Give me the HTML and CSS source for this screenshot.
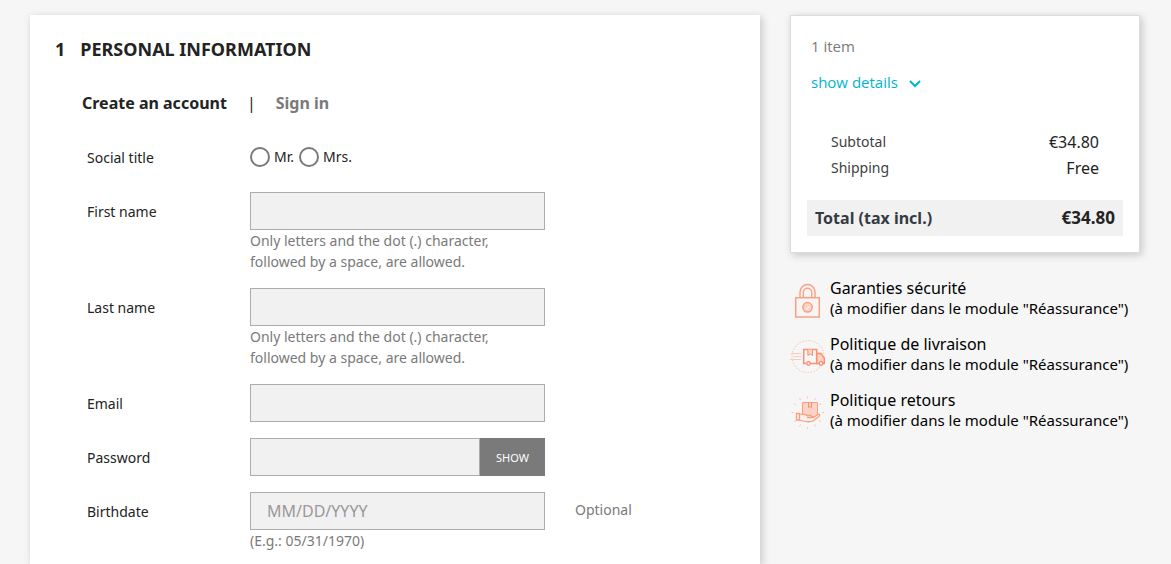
FILE: index.html
```html
<!DOCTYPE html>
<html lang="en">
<head>
<meta charset="utf-8">
<title>Checkout</title>
<link rel="stylesheet" href="styles.css">
</head>
<body>
<div class="checkout">
  <main class="card step">
    <h1 class="step-title"><span>1</span><span>Personal Information</span></h1>
    <nav class="tabs">
      <a class="tab tab-active" href="#create">Create an account</a>
      <span class="tab-divider">|</span>
      <a class="tab" href="#signin">Sign in</a>
    </nav>
    <form class="form">
      <div class="row" role="radiogroup" aria-labelledby="social">
        <span class="row-label" id="social">Social title</span>
        <div class="radios">
          <label class="radio"><input type="radio" name="title">Mr.</label>
          <label class="radio"><input type="radio" name="title">Mrs.</label>
        </div>
      </div>
      <div class="row">
        <label class="row-label" for="first">First name</label>
        <div class="field">
          <input class="control" id="first" type="text">
          <p class="hint">Only letters and the dot (.) character, followed by a space, are allowed.</p>
        </div>
      </div>
      <div class="row">
        <label class="row-label" for="last">Last name</label>
        <div class="field">
          <input class="control" id="last" type="text">
          <p class="hint">Only letters and the dot (.) character, followed by a space, are allowed.</p>
        </div>
      </div>
      <div class="row">
        <label class="row-label" for="email">Email</label>
        <div class="field"><input class="control" id="email" type="email"></div>
      </div>
      <div class="row">
        <label class="row-label" for="password">Password</label>
        <div class="field password">
          <input class="control" id="password" type="password">
          <button class="show" type="button">Show</button>
        </div>
      </div>
      <div class="row">
        <label class="row-label" for="birth">Birthdate</label>
        <div class="field">
          <input class="control" id="birth" type="text" placeholder="MM/DD/YYYY">
          <p class="hint">(E.g.: 05/31/1970)</p>
        </div>
        <span class="optional">Optional</span>
      </div>
    </form>
  </main>
  <aside class="side">
    <section class="card summary">
      <p class="count">1 item</p>
      <a class="details" href="#details">show details
        <svg class="chevron" width="14" height="9" viewBox="0 0 14 9"><path d="M2 2l5 5 5-5" fill="none" stroke="currentColor" stroke-width="2"/></svg>
      </a>
      <dl class="lines">
        <div class="line"><dt>Subtotal</dt><dd>€34.80</dd></div>
        <div class="line"><dt>Shipping</dt><dd>Free</dd></div>
      </dl>
      <div class="total"><span>Total (tax incl.)</span><span class="total-value">€34.80</span></div>
    </section>
    <ul class="reassurance">
      <li class="promise">
        <svg class="promise-icon" viewBox="0 0 35 35" fill="none" stroke="#fca082">
          <rect x="5.700" y="14.700" width="23.600" height="19.300" stroke-width="1.500"/>
          <path d="M10 14.500V9a7.500 7.500 0 0 1 15 0v5.500M13.300 14.500V9.500a4.200 4.200 0 0 1 8.400 0v5" stroke-width="1.400"/>
          <circle cx="17.500" cy="24.300" r="4.700" fill="#fcd3c6" stroke-width="1.500"/>
          <path d="M15.500 24.500l1.500 1.500 3-3" stroke="#fff" stroke-width=".8"/>
        </svg>
        <p class="promise-text">Garanties sécurité<br><span class="promise-note">(à modifier dans le module "Réassurance")</span></p>
      </li>
      <li class="promise">
        <svg class="promise-icon" viewBox="0 0 35 35" fill="none" stroke="#f98f6c">
          <circle cx="18" cy="17.500" r="16" stroke="#f9cfc2" stroke-width="1.200" stroke-dasharray="1.500 1.500"/>
          <path d="M1 14.500h10M3 17.500h8M0 20.500h11" stroke="#fbcbbb"/>
          <path d="M13.700 10.500h13v14h-13z" fill="#f6f6f6" stroke-width="1.500"/>
          <path d="M17.900 10.500v6l2.300-1.500 2.300 1.500v-6" fill="#fcd3c6"/>
          <path d="M26.700 14.500h4.300l3.500 5v5h-7.800z" fill="#fcd3c6" stroke-width="1.500"/>
          <circle cx="18.500" cy="24.500" r="1.800" fill="#f6f6f6" stroke-width="1.300"/>
          <circle cx="31" cy="24.500" r="1.800" fill="#f6f6f6" stroke-width="1.300"/>
        </svg>
        <p class="promise-text">Politique de livraison<br><span class="promise-note">(à modifier dans le module "Réassurance")</span></p>
      </li>
      <li class="promise">
        <svg class="promise-icon" viewBox="0 0 35 35" fill="none" stroke="#fb9f82">
          <path d="M17.500 1.500v2M9.500 3l1 2M25.500 3l-1 2M4 8.500l2 1.500M31 8.500l-2 1.500M1.500 17.500h2M32 17.500h2M4 26.500l2-1M31 26.500l-2-1M9.500 31.500l1-2M25.500 31.500l-1-2M17.500 32v2" stroke="#fbc4b2"/>
          <path d="M12.500 7.500h15v14h-15z" fill="#fcd3c6"/>
          <path d="M18.500 7.500v5l1.500-1 1.500 1v-5" stroke="#f98f6c"/>
          <path d="M6.500 18.500h3v6.500h-3z" fill="#f6f6f6" stroke-width="1.300"/>
          <path d="M9.500 19.500c4-1.500 6 .5 8 1h3.500c1.500.5 1 2-.5 2H17h6l5-3c2-.5 2 1 1 2l-6 4.500c-4 1.500-9 .5-13.500-1z" fill="#f9f1ee" stroke-width="1.300"/>
        </svg>
        <p class="promise-text">Politique retours<br><span class="promise-note">(à modifier dans le module "Réassurance")</span></p>
      </li>
    </ul>
  </aside>
</div>
</body>
</html>
```
FILE: styles.css
```css
* { box-sizing: border-box; }
body, h1, p, dl, dd, ul { margin: 0; padding: 0; }
body {
  background: #f6f6f6;
  color: #232323;
  font-family: "Noto Sans", sans-serif;
  font-size: 14px;
  line-height: 21px;
}
a { text-decoration: none; }
input, button { font: inherit; }

.checkout {
  display: grid;
  grid-template-columns: minmax(0, 1fr) 350px;
  gap: 30px;
  min-height: 100vh;
  padding: 15px 31px 0 30px;
}
.card {
  background: #fff;
  box-shadow: 2px 2px 8px rgba(0, 0, 0, .2);
}

.step { padding: 22px 25px 0; }
.step-title {
  display: flex;
  gap: 15px;
  font-size: 18px;
  line-height: 25px;
  text-transform: uppercase;
}
.tabs {
  display: flex;
  align-items: center;
  gap: 20px;
  margin: 29px 0 23px 27px;
  font-size: 16px;
  line-height: 24px;
  font-weight: 700;
}
.tab { color: #7a7a7a; }
.tab-active { color: #232323; }
.tab-divider { color: #232323; font-weight: 400; }

.form {
  display: grid;
  gap: 16px;
  padding-left: 32px;
}
.row {
  display: grid;
  grid-template-columns: 163px 295px 1fr;
  align-items: start;
}
.row-label { line-height: 40px; height: 38px; }
.optional { padding-left: 30px; color: #7a7a7a; line-height: 36px; }
.radios {
  display: flex;
  align-items: center;
  gap: 5px;
  height: 38px;
}
.radio {
  display: flex;
  align-items: center;
  gap: 4px;
  line-height: 20px;
}
.radio input {
  appearance: none;
  width: 20px;
  height: 20px;
  margin: 0;
  border: 2px solid #7a7a7a;
  border-radius: 50%;
  background: #fff;
}
.control {
  display: block;
  width: 100%;
  height: 38px;
  padding: 8px 16px;
  border: 1px solid #acacac;
  border-radius: 0;
  background: #f1f1f1;
  color: #232323;
  font-size: 16px;
}
.control::placeholder { color: #999; opacity: 1; }
.hint { color: #7a7a7a; }
.password { display: flex; }
.show {
  flex: none;
  width: 65px;
  border: 0;
  background: #7a7a7a;
  color: #fff;
  font-size: 11px;
  text-transform: uppercase;
}

.summary {
  padding: 19px 16px 16px;
  border: 1px solid #dcdcdc;
}
.count, .details {
  padding-left: 4px;
  font-family: "Open Sans", sans-serif;
  font-size: 15px;
  line-height: 22px;
}
.count { color: #7a7a7a; }
.details {
  display: flex;
  align-items: center;
  gap: 10px;
  margin-top: 14px;
  color: #00b4d3;
}
.chevron { margin-top: 2px; }
.lines { margin: 36px 24px 19px; }
.line {
  display: flex;
  justify-content: space-between;
  line-height: 26px;
}
.line dt { color: #414141; }
.line dd { font-size: 16px; }
.total {
  display: flex;
  justify-content: space-between;
  padding: 6px 8px;
  background: #f1f1f1;
  color: #363a42;
  font-size: 16px;
  line-height: 24px;
  font-weight: 700;
}
.total-value { color: #232323; font-size: 17px; }

.reassurance {
  display: grid;
  gap: 16px;
  margin-top: 25px;
  list-style: none;
}
.promise {
  display: flex;
  align-items: flex-end;
  gap: 5px;
  color: #000;
  line-height: 20px;
}
.promise-icon { flex: none; width: 35px; height: 35px; }
.promise-text { font-size: 16px; }
.promise-note { font-size: 15px; }
```
